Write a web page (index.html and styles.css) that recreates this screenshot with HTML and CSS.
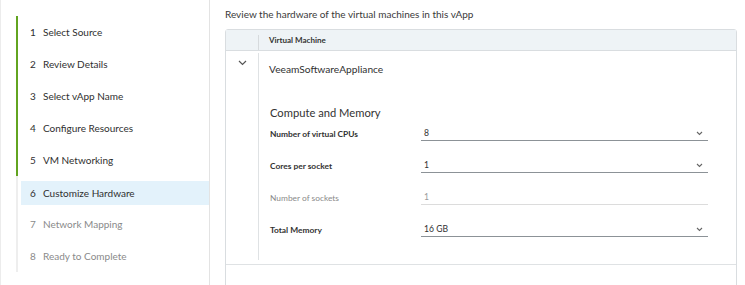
FILE: index.html
```html
<!DOCTYPE html>
<html>
<head>
<meta charset="utf-8">
<link rel="stylesheet" href="styles.css">
</head>
<body>
<div class="page">
  <nav class="sidebar">
    <ol class="steps">
      <li class="step done"><span class="num">1</span><span class="label">Select Source</span></li>
      <li class="step done"><span class="num">2</span><span class="label">Review Details</span></li>
      <li class="step done"><span class="num">3</span><span class="label">Select vApp Name</span></li>
      <li class="step done"><span class="num">4</span><span class="label">Configure Resources</span></li>
      <li class="step done"><span class="num">5</span><span class="label">VM Networking</span></li>
      <li class="step current"><span class="inner"><span class="num">6</span><span class="label">Customize Hardware</span></span></li>
      <li class="step todo"><span class="num">7</span><span class="label">Network Mapping</span></li>
      <li class="step todo"><span class="num">8</span><span class="label">Ready to Complete</span></li>
    </ol>
  </nav>
  <main class="main">
    <p class="intro">Review the hardware of the virtual machines in this vApp</p>
    <div class="grid">
      <div class="grid-head">
        <div class="head-spacer"></div>
        <div class="head-cell">Virtual Machine</div>
      </div>
      <div class="grid-row">
        <div class="expander">
          <svg width="9" height="6" viewBox="0 0 9 6"><polyline points="1,1 4.5,4.5 8,1" fill="none" stroke="#555" stroke-width="1.2"/></svg>
        </div>
        <div class="row-body">
          <div class="vm-name">VeeamSoftwareAppliance</div>
          <h3 class="section-title">Compute and Memory</h3>
          <div class="form">
            <div class="form-row">
              <span class="form-label">Number of virtual CPUs</span>
              <span class="select"><span class="value">8</span><svg class="caret" width="7" height="5" viewBox="0 0 7 5"><polyline points="1,1 3.5,3.5 6,1" fill="none" stroke="#666" stroke-width="1.1"/></svg></span>
            </div>
            <div class="form-row">
              <span class="form-label">Cores per socket</span>
              <span class="select"><span class="value">1</span><svg class="caret" width="7" height="5" viewBox="0 0 7 5"><polyline points="1,1 3.5,3.5 6,1" fill="none" stroke="#666" stroke-width="1.1"/></svg></span>
            </div>
            <div class="form-row disabled">
              <span class="form-label">Number of sockets</span>
              <span class="select"><span class="value">1</span></span>
            </div>
            <div class="form-row">
              <span class="form-label">Total Memory</span>
              <span class="select"><span class="value">16 GB</span><svg class="caret" width="7" height="5" viewBox="0 0 7 5"><polyline points="1,1 3.5,3.5 6,1" fill="none" stroke="#666" stroke-width="1.1"/></svg></span>
            </div>
          </div>
        </div>
      </div>
      <div class="grid-footer"></div>
    </div>
  </main>
</div>
</body>
</html>
```
FILE: styles.css
```css
* { box-sizing: border-box; }
html, body {
  margin: 0;
  padding: 0;
  background: #fff;
}
body {
  width: 745px;
  height: 285px;
  overflow: hidden;
  font-family: Lato, "Open Sans", sans-serif;
  color: #313131;
}
.page {
  display: flex;
  height: 285px;
}
.sidebar {
  width: 210px;
  flex: none;
  border-left: 1px solid #ececec;
  border-right: 1px solid #e3e3e3;
  padding: 16px 0 0 15px;
}
.steps {
  list-style: none;
  margin: 0;
  padding: 0;
}
.step {
  height: 32px;
  display: flex;
  align-items: center;
  font-size: 10px;
  line-height: 12px;
  border-left: 2px solid #62a420;
  padding-left: 12px;
  color: #2f2f2f;
}
.step .num {
  width: 13px;
  flex: none;
}
.step.current,
.step.todo {
  border-left-color: #eeeeee;
}
.step.todo {
  color: #8a8a8a;
}
.step.current {
  padding: 5px 0 3px 3px;
  align-items: stretch;
}
.step.current .inner {
  flex: 1;
  display: flex;
  align-items: center;
  background: #e3f2fb;
  padding-left: 9px;
}
.main {
  flex: 1;
  padding: 0 8px 0 15px;
}
.intro {
  margin: 7px 0 0;
  font-size: 10px;
  line-height: 14px;
  color: #3a3a3a;
}
.grid {
  margin-top: 8px;
  width: 512px;
  height: 280px;
  border: 1px solid #d9dde0;
  border-radius: 3px;
}
.grid-head {
  display: flex;
  height: 21px;
  background: #eef3f6;
  border-bottom: 1px solid #d9dde0;
}
.head-spacer {
  width: 32px;
  flex: none;
}
.head-cell {
  flex: 1;
  border-left: 1px solid #d6dadd;
  margin-top: 5px;
  padding-left: 10px;
  font-size: 8px;
  font-weight: 700;
  line-height: 10px;
  color: #333;
}
.grid-row {
  display: flex;
  border-bottom: 1px solid #dfe2e4;
}
.expander {
  width: 32px;
  flex: none;
  display: flex;
  justify-content: center;
  padding-top: 9px;
  padding-left: 1px;
}
.row-body {
  flex: 1;
  border-left: 1px solid #dfe2e4;
  margin: 2px 0 4px;
  padding: 9px 0 23px 10px;
}
.vm-name {
  font-size: 10.2px;
  line-height: 14px;
}
.section-title {
  margin: 29px 0 0 1px;
  font-size: 11.2px;
  font-weight: 400;
  line-height: 16px;
  color: #333;
}
.form {
  display: flex;
  flex-direction: column;
  gap: 12px;
  padding-left: 1px;
}
.form-row {
  display: flex;
  align-items: flex-end;
  height: 20px;
}
.form-label {
  width: 151px;
  flex: none;
  font-size: 8.4px;
  font-weight: 700;
  line-height: 12px;
  padding-bottom: 1px;
}
.select {
  width: 287px;
  height: 20px;
  display: flex;
  align-items: flex-end;
  justify-content: space-between;
  border-bottom: 1px solid #8c9297;
  padding: 0 5px 1px 3px;
  font-size: 8.6px;
  line-height: 12px;
}
.caret {
  margin-bottom: 3px;
}
.form-row.disabled .form-label {
  font-weight: 400;
  color: #8a8a8a;
}
.form-row.disabled .select {
  color: #9a9a9a;
  border-bottom-color: #dcdcdc;
}
.grid-footer {
  height: 40px;
}
```
